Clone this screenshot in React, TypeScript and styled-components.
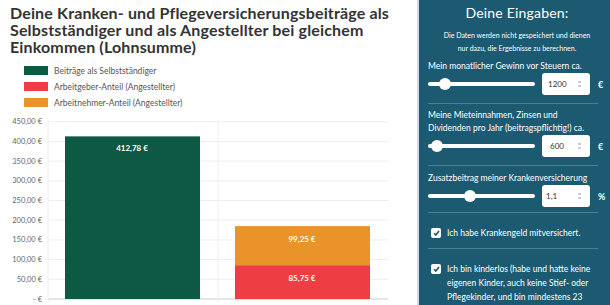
import React from "react";
import styled, { createGlobalStyle } from "styled-components";

const GlobalStyle = createGlobalStyle`
  html, body {
    margin: 0;
    padding: 0;
    background: #fff;
  }
  body {
    font-family: "Lato", "Open Sans", sans-serif;
  }
`;

const Page = styled.div`
  display: flex;
  width: 610px;
  height: 305px;
  overflow: hidden;
`;

const Main = styled.div`
  width: 417px;
  flex-shrink: 0;
  display: flex;
  flex-direction: column;
`;

const Title = styled.h1`
  margin: 0;
  padding: 4px 0 0 10px;
  font-size: 16px;
  line-height: 17px;
  font-weight: 700;
  color: #333;
  letter-spacing: 0.15px;
`;

const Legend = styled.div`
  display: flex;
  flex-direction: column;
  gap: 7px;
  margin: 11px 0 0 24px;
`;

const LegendItem = styled.div`
  display: flex;
  align-items: center;
  gap: 6px;
  font-size: 8.5px;
  color: #555;
  height: 9px;
`;

const Swatch = styled.span<{ $color: string }>`
  width: 24px;
  height: 9px;
  background: ${(p) => p.$color};
`;

const ChartBox = styled.div`
  margin-top: 11px;
`;

const Panel = styled.aside`
  flex: 1;
  background: #1c5a72;
  border-left: 2px solid #c6dce6;
  color: #fff;
  padding: 0 4px 0 9px;
  display: flex;
  flex-direction: column;
`;

const PanelTitle = styled.h2`
  margin: 4px 0 0;
  font-size: 14px;
  font-weight: 400;
  text-align: center;
  line-height: 18px;
  letter-spacing: 0.2px;
`;

const Note = styled.p`
  margin: 7px 0 0;
  font-size: 7px;
  line-height: 13px;
  text-align: center;
`;

const Section = styled.div<{ $top: number; $bottom: number }>`
  padding-top: ${(p) => p.$top}px;
  padding-bottom: ${(p) => p.$bottom}px;
  border-bottom: 1px solid rgba(255, 255, 255, 0.22);
  margin-right: 8px;
`;

const Label = styled.div`
  font-size: 8.5px;
  line-height: 13px;
`;

const Row = styled.div`
  display: flex;
  align-items: center;
  margin-right: -8px;
`;

const Track = styled.div`
  position: relative;
  width: 107px;
  height: 4px;
  border-radius: 2px;
  background: #fff;
`;

const Thumb = styled.span`
  position: absolute;
  top: 50%;
  width: 12px;
  height: 12px;
  border-radius: 50%;
  background: #fff;
  transform: translate(-50%, -50%);
`;

const NumBox = styled.div<{ $indent: number }>`
  position: relative;
  margin-left: 7px;
  width: 48px;
  height: 22px;
  border-radius: 3px;
  background: #fff;
  color: #333;
  font-size: 8px;
  display: flex;
  align-items: center;
  padding-left: ${(p) => p.$indent}px;
  box-sizing: border-box;
`;

const Spin = styled.span`
  position: absolute;
  right: 9px;
  top: 8px;
  width: 3px;
  height: 6px;
  display: flex;
  flex-direction: column;
  justify-content: space-between;
  &::before,
  &::after {
    content: "";
    height: 2px;
    background: #ccc;
  }
`;

const Unit = styled.span`
  margin-left: 8px;
  font-size: 9px;
  font-weight: 700;
`;

const Check = styled.label<{ $top: number; $bottom: number }>`
  display: flex;
  gap: 6px;
  padding-top: ${(p) => p.$top}px;
  padding-bottom: ${(p) => p.$bottom}px;
  font-size: 8.5px;
  line-height: 14px;
  margin-right: 8px;
  border-bottom: 1px solid rgba(255, 255, 255, 0.22);
`;

const Box = styled.span`
  flex-shrink: 0;
  width: 10px;
  height: 10px;
  margin: 2px 0 0 3px;
  border-radius: 2px;
  background: #fff;
  display: flex;
  align-items: center;
  justify-content: center;
`;

const legend = [
  { color: "#0e5944", text: "Beiträge als Selbstständiger" },
  { color: "#ef3e43", text: "Arbeitgeber-Anteil (Angestellter)" },
  { color: "#ea9328", text: "Arbeitnehmer-Anteil (Angestellter)" },
];

const ticks = [450, 400, 350, 300, 250, 200, 150, 100, 50, 0];

const Chart = () => {
  const zero = 181;
  const k = 0.394;
  const y = (v: number) => zero - v * k;
  return (
    <svg width="417" height="186" style={{ display: "block" }}>
      {ticks.map((t) => (
        <g key={t}>
          <line x1={48} x2={388} y1={y(t)} y2={y(t)} stroke={t === 0 ? "#ccc" : "#eee"} strokeWidth={1} />
          <text
            x={42}
            y={y(t) + 2.5}
            textAnchor="end"
            fontSize="7.5"
            fill="#666"
            fontFamily="Lato, sans-serif"
          >
            {t === 0 ? "- €" : `${t},00 €`}
          </text>
        </g>
      ))}
      <line x1={48} x2={48} y1={y(450) - 2} y2={zero + 4} stroke="#eee" />
      <line x1={218} x2={218} y1={y(450) - 2} y2={zero + 4} stroke="#eee" />
      <rect x={65} y={y(412.78)} width={135} height={412.78 * k} fill="#0e5944" />
      <rect x={235} y={y(185)} width={135} height={99.25 * k} fill="#ea9328" />
      <rect x={235} y={y(85.75)} width={135} height={85.75 * k} fill="#ef3e43" />
      <g fontSize="8" fontWeight="700" fill="#fff" textAnchor="middle" fontFamily="Lato, sans-serif">
        <text x={132} y={y(412.78) + 15}>412,78 €</text>
        <text x={302} y={y(185) + 16}>99,25 €</text>
        <text x={302} y={y(85.75) + 16}>85,75 €</text>
      </g>
    </svg>
  );
};

const Slider = ({ pos }: { pos: number }) => (
  <Track>
    <Thumb style={{ left: `${pos}%` }} />
  </Track>
);

const Tick = () => (
  <svg width="7" height="6" viewBox="0 0 7 6">
    <path d="M1 3.2 L2.8 5 L6 1" fill="none" stroke="#1c5a72" strokeWidth="1.6" />
  </svg>
);

export default function App() {
  return (
    <>
      <GlobalStyle />
      <Page>
        <Main>
          <Title>
            Deine Kranken- und Pflegeversicherungsbeiträge als Selbstständiger und als Angestellter bei gleichem
            Einkommen (Lohnsumme)
          </Title>
          <Legend>
            {legend.map((l) => (
              <LegendItem key={l.text}>
                <Swatch $color={l.color} />
                {l.text}
              </LegendItem>
            ))}
          </Legend>
          <ChartBox>
            <Chart />
          </ChartBox>
        </Main>
        <Panel>
          <PanelTitle>Deine Eingaben:</PanelTitle>
          <Note>
            Die Daten werden nicht gespeichert und dienen
            <br />
            nur dazu, die Ergebnisse zu berechnen.
          </Note>
          <Section $top={5} $bottom={8}>
            <Label>Mein monatlicher Gewinn vor Steuern ca.</Label>
            <Row>
              <Slider pos={16} />
              <NumBox $indent={6}>
                1200
                <Spin />
              </NumBox>
              <Unit>€</Unit>
            </Row>
          </Section>
          <Section $top={5} $bottom={8}>
            <Label>
              Meine Mieteinnahmen, Zinsen und
              <br />
              Dividenden pro Jahr (beitragspflichtig!) ca.
            </Label>
            <Row>
              <Slider pos={8} />
              <NumBox $indent={8}>
                600
                <Spin />
              </NumBox>
              <Unit>€</Unit>
            </Row>
          </Section>
          <Section $top={6} $bottom={5}>
            <Label>Zusatzbeitrag meiner Krankenversicherung</Label>
            <Row>
              <Slider pos={39} />
              <NumBox $indent={4}>
                1,1
                <Spin />
              </NumBox>
              <Unit>%</Unit>
            </Row>
          </Section>
          <Check $top={13} $bottom={8}>
            <Box>
              <Tick />
            </Box>
            Ich habe Krankengeld mitversichert.
          </Check>
          <Check $top={13} $bottom={7}>
            <Box>
              <Tick />
            </Box>
            Ich bin kinderlos (habe und hatte keine eigenen Kinder, auch keine Stief- oder Pflegekinder, und bin
            mindestens 23 Jahre alt und 1940 oder später geboren)
          </Check>
        </Panel>
      </Page>
    </>
  );
}
